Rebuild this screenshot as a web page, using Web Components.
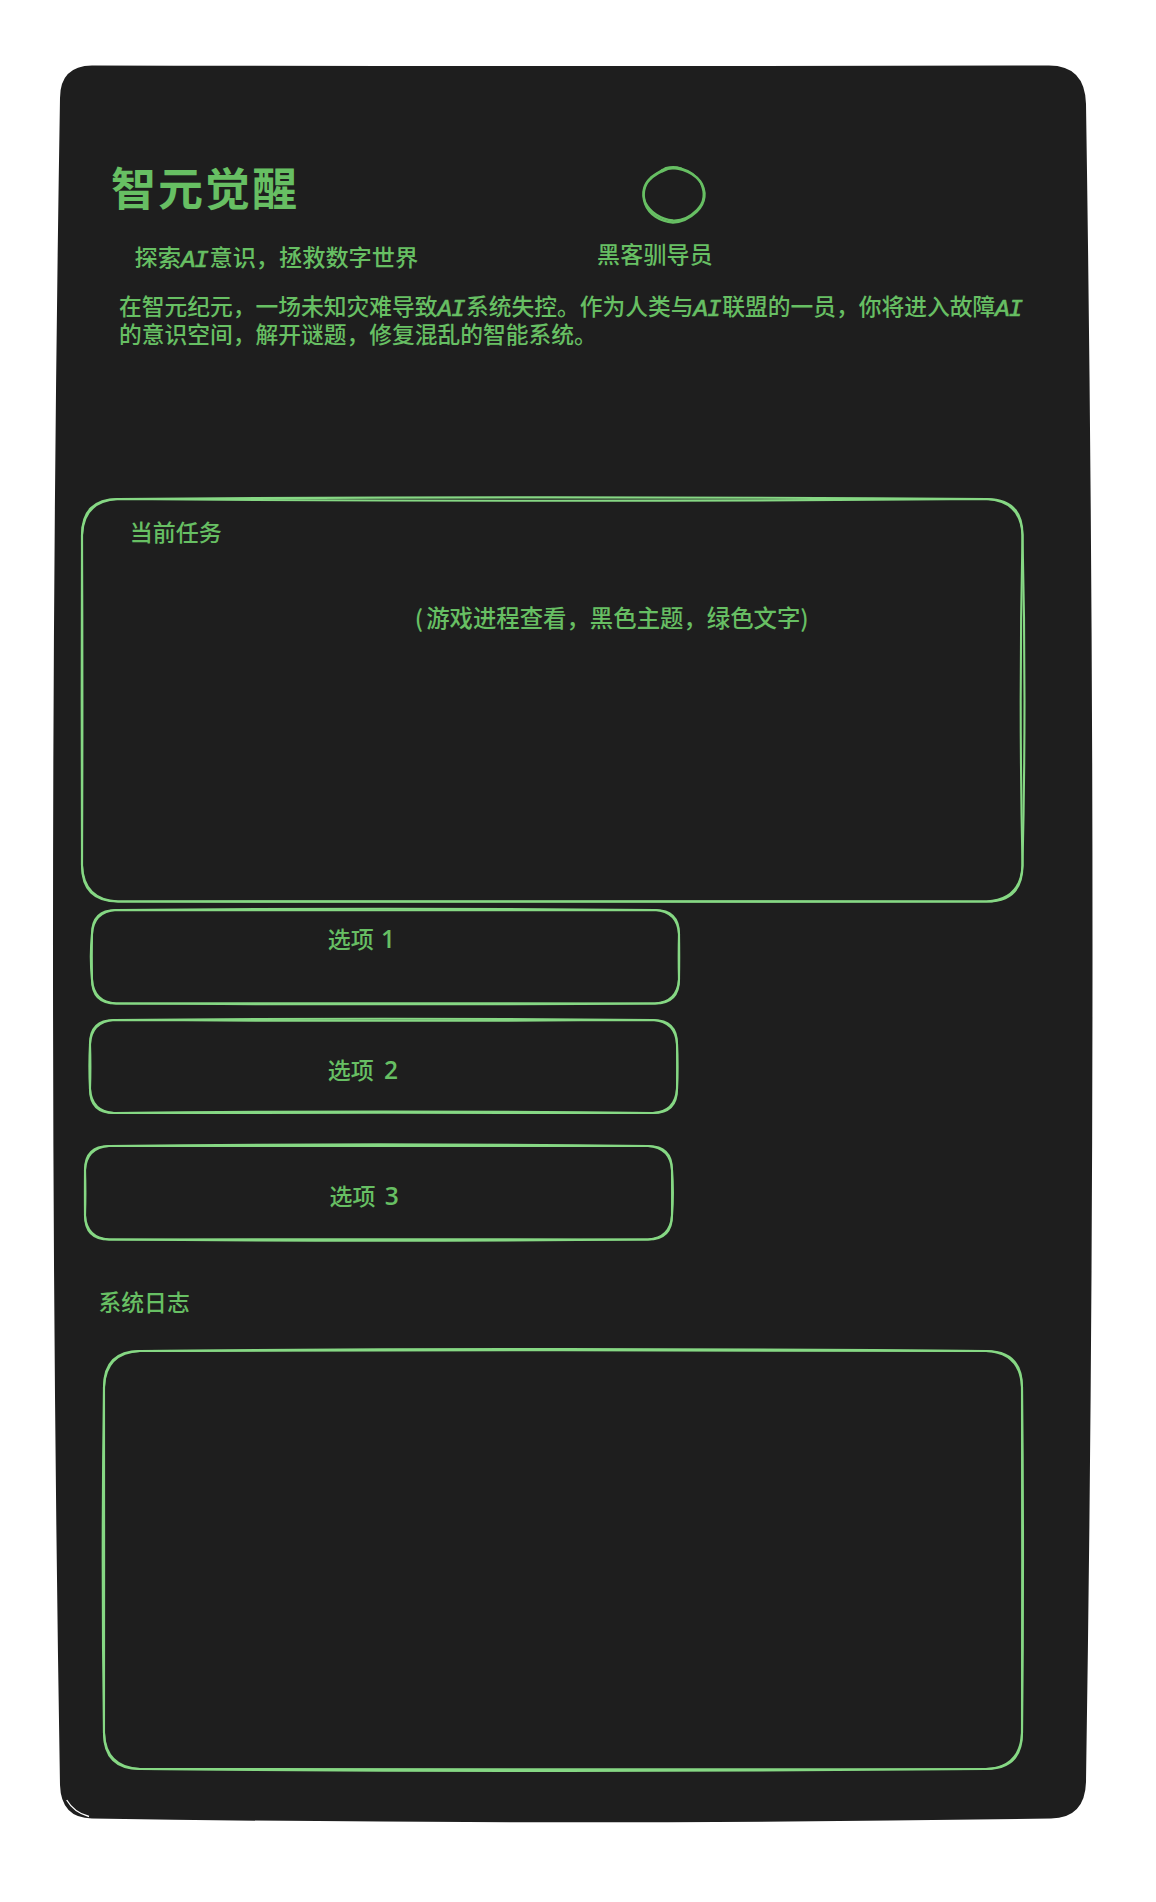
<!DOCTYPE html>
<html lang="zh-CN">
<head>
<meta charset="utf-8">
<title>智元觉醒</title>
<style>
html,body{margin:0;padding:0;background:#fff}
body{width:1156px;height:1902px;overflow:hidden}
</style>
</head>
<body>
<game-page></game-page>
<script>
/* Rounded rectangle drawn in two loose pen passes. "bow" lists, per pass,
   how far the top, right, bottom and left edges swell outwards. */
const outline = (w, h, r, [t, ri, b, l], j = 0) =>
  `M${r} 0 Q${w / 2} ${-2 * t} ${w - r} 0 Q${w - j} ${j} ${w} ${r} ` +
  `Q${w + 2 * ri} ${h / 2} ${w} ${h - r} Q${w - j} ${h - j} ${w - r} ${h} ` +
  `Q${w / 2} ${h + 2 * b} ${r} ${h} Q${j} ${h - j} 0 ${h - r} ` +
  `Q${-2 * l} ${h / 2} 0 ${r} Q${j} ${j} ${r} 0Z`;

customElements.define('sketch-box', class extends HTMLElement {
  connectedCallback() {
    const w = +this.getAttribute('w'), h = +this.getAttribute('h'), r = +this.getAttribute('r');
    const passes = this.getAttribute('bow').split('|').map(s => s.trim().split(/\s+/).map(Number));
    this.attachShadow({mode: 'open'}).innerHTML = `
      <style>
        :host{display:flex;flex-direction:column;position:relative;box-sizing:border-box;width:${w}px;height:${h}px;flex:none}
        svg{position:absolute;left:0;top:0;overflow:visible;pointer-events:none}
        path{fill:none;stroke:#86d884;stroke-width:2.1}
      </style>
      <svg width="${w}" height="${h}">${passes.map((p, i) => `<path d="${outline(w, h, r, p, i * 1.6)}"/>`).join('')}</svg>
      <slot></slot>`;
  }
});

customElements.define('sketch-text', class extends HTMLElement {
  connectedCallback() {
    const s = +this.getAttribute('size') || 23;
    this.attachShadow({mode: 'open'}).innerHTML = `
      <style>
        :host{display:block;flex:none;white-space:nowrap;color:#67bf63;
          font:500 ${s}px/30px "Noto Sans CJK SC",sans-serif}
      </style><slot></slot>`;
  }
});

customElements.define('latin-word', class extends HTMLElement {
  connectedCallback() {
    this.attachShadow({mode: 'open'}).innerHTML = `
      <style>:host{display:inline-block;width:28.6px;letter-spacing:-1px;vertical-align:-1px;
        line-height:20px;height:20px;font-family:"Liberation Mono",monospace;font-style:italic;font-weight:400;
        font-size:24px;-webkit-text-stroke:.7px currentColor}</style><slot></slot>`;
  }
});

customElements.define('sketch-avatar', class extends HTMLElement {
  connectedCallback() {
    this.attachShadow({mode: 'open'}).innerHTML = `
      <style>:host{display:block;width:66px;height:58px;flex:none}svg{display:block;overflow:visible}
      path{fill:none;stroke:#67bf63;stroke-width:2.3;stroke-linecap:round}</style>
      <svg width="66" height="58" viewBox="640 166 66 58">
        <path d="M661 170 C674 164.500 691 171.500 699 181 C706 191 705 203 695.500 212 C688 219 681 222.500 672 222.500 C659 221.500 648 214.500 644 203.500 C640.500 193 643 184 650 177.500 C656 172.500 661 170.500 665 168 C671 166.500 676 167 680 168.500"/>
        <path d="M661 171.500 C668 167.500 673 167 680 168.500 C689 171 696 176.500 700 183 C704.500 193 703 203 696 210 C689 217 682 221 672 220.500 C660 219.500 649 212.500 644 202 C640.500 191 645 182 651 177.500 C655 174 659 172 664 170"/>
      </svg>`;
  }
});

customElements.define('choice-list', class extends HTMLElement {
  connectedCallback() {
    this.attachShadow({mode: 'open'}).innerHTML = `
      <style>
        :host{display:flex;flex-direction:column;align-items:flex-start}
        .a{margin:9px 0 0 38.300px}.b{margin:16px 0 0 36.300px}.c{margin:33.500px 0 0 30.500px}
        .n{font-family:"Open Sans",sans-serif;font-weight:600;font-size:24.500px;line-height:1;margin-left:4px}
      </style>
      <sketch-box class="a" w="587" h="93.500" r="24" bow="1.3 -.3 .8 1.2|-.3 .2 -.3 .2">
        <sketch-text size="23" style="margin:13px 0 0 235.500px">选项 <span class="n" style="margin-left:2px">1</span></sketch-text></sketch-box>
      <sketch-box class="b" w="587" h="93" r="24" bow="1.3 .5 -.2 .6|-.8 .2 -1.4 -.4">
        <sketch-text size="23" style="margin:34.500px 0 0 237.500px">选项 <span class="n" style="margin-left:5px">2</span></sketch-text></sketch-box>
      <sketch-box class="c" w="587" h="93.500" r="24" bow="1.6 .9 1.3 .1|.1 .1 -.2 -.4">
        <sketch-text size="23" style="margin:34px 0 0 245px">选项 <span class="n">3</span></sketch-text></sketch-box>`;
  }
});

customElements.define('game-page', class extends HTMLElement {
  connectedCallback() {
    this.attachShadow({mode: 'open'}).innerHTML = `
      <style>
        :host{display:flex;flex-direction:column;position:relative;isolation:isolate;box-sizing:border-box;width:1156px;height:1902px;padding:66px 60px 0 54px}
        .bg{position:absolute;left:0;top:0;z-index:-1}
        header{display:flex;height:222px;flex:none}
        .brand{width:541px;padding:91px 0 0 57px;box-sizing:border-box}
        .sub{margin:24px 0 0 23.500px}
        .hero{padding-top:100px}
        .hero sketch-avatar{margin-left:45.500px}
        .hero sketch-text{margin:14.400px 0 0 2px;letter-spacing:.2px}
        .intro{margin:3.600px 0 0 65px;line-height:28px}
        .task{margin:151.400px 0 0 28.300px}
        .log-title{margin:47px 0 0 44.500px}
        .log{margin:34px 0 0 50.400px}
      </style>
      <svg class="bg" width="1156" height="1902">
        <path fill="#1e1e1e" d="M92 65.500 Q570 66.600 1048 65.500 Q1085 65 1086 104 Q1099 950 1086 1782 Q1085 1818 1051 1818.500 Q570 1826 92 1818.500 Q61 1818 60 1785 Q46 950 60 98 Q60 66 92 65.500Z"/>
        <path fill="none" d="M66.700 1800 Q74 1812.500 89 1816.500" stroke="#fff" stroke-width="1.3"/>
      </svg>
      <header>
        <div class="brand">
          <sketch-text size="45" style="line-height:60px;letter-spacing:2px;font-weight:700">智元觉醒</sketch-text>
          <sketch-text class="sub" size="23.200">探索<latin-word>AI</latin-word>意识，拯救数字世界</sketch-text>
        </div>
        <div class="hero"><sketch-avatar></sketch-avatar><sketch-text>黑客驯导员</sketch-text></div>
      </header>
      <sketch-text class="intro" size="22.750">在智元纪元，一场未知灾难导致<latin-word>AI</latin-word>系统失控。作为人类与<latin-word>AI</latin-word>联盟的一员，你将进入故障<latin-word>AI</latin-word><br>的意识空间，解开谜题，修复混乱的智能系统。</sketch-text>
      <sketch-box class="task" w="940.500" h="402.500" r="36" bow="1.6 2 .3 .3|-1.8 -1.800 -.3 -.4">
        <sketch-text style="margin:17px 0 0 47.500px">当前任务</sketch-text>
        <sketch-text size="23.400" style="margin:56px 0 0 332.500px"><span style="margin-right:3px">(</span>游戏进程查看，黑色主题，绿色文字)</sketch-text>
      </sketch-box>
      <choice-list></choice-list>
      <sketch-text class="log-title" size="22.800">系统日志</sketch-text>
      <sketch-box class="log" w="918" h="418" r="36" bow="1.900 1 1.900 1.300|.8 .2 .4 -.1"></sketch-box>`;
  }
});
</script>
</body>
</html>
